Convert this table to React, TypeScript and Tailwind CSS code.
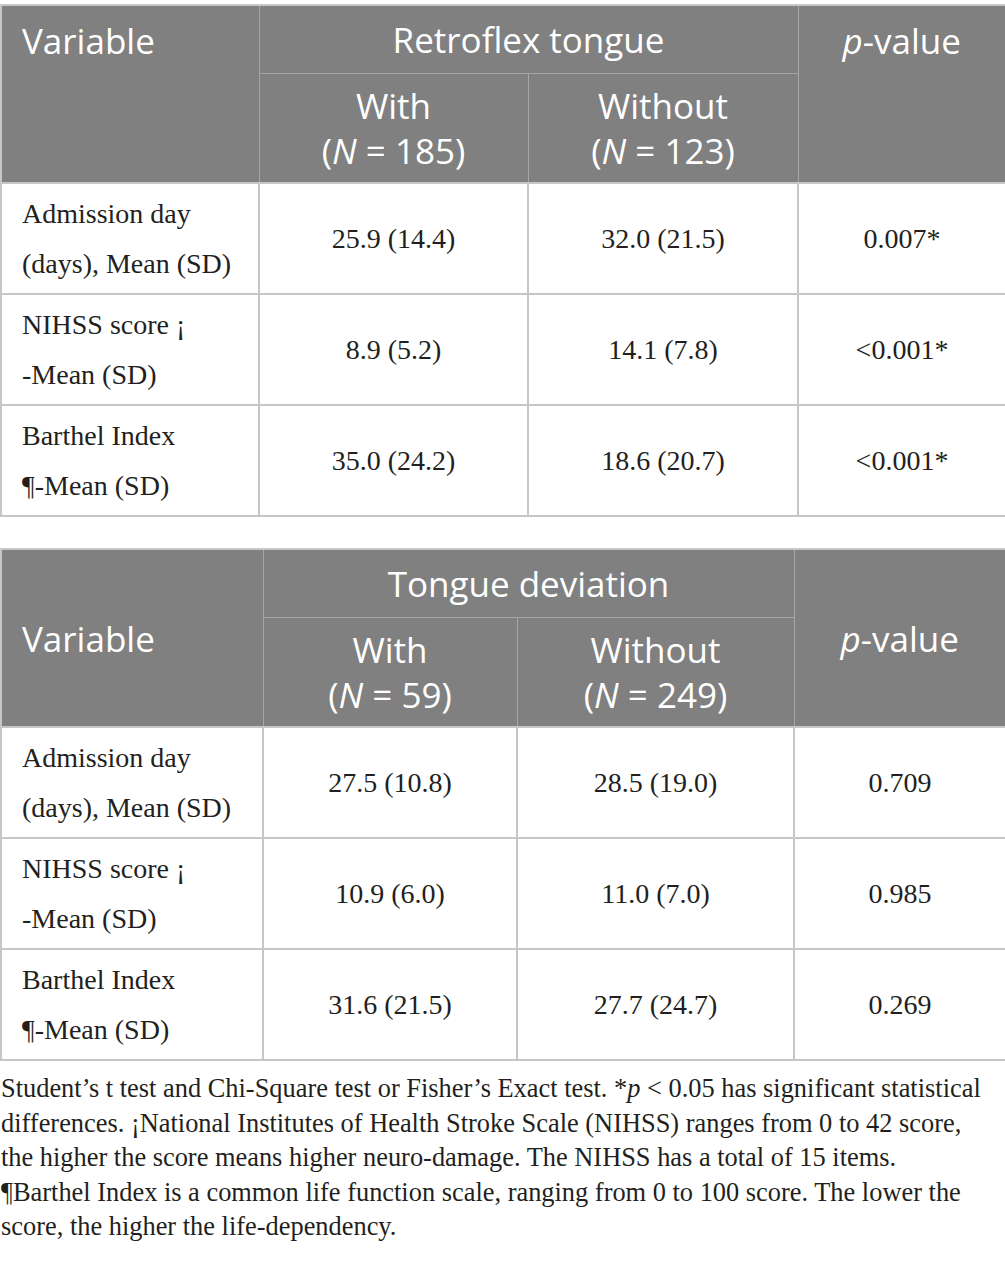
import React from 'react';

type Row = { label: [string, string]; a: string; b: string; p: string };

type TableSpec = {
  group: string;
  nWith: number;
  nWithout: number;
  cols: [string, string, string, string];
  centered: boolean;
  rows: Row[];
};

const tables: TableSpec[] = [
  {
    group: 'Retroflex tongue',
    nWith: 185,
    nWithout: 123,
    cols: ['w-[258px]', 'w-[269px]', 'w-[270px]', 'w-[208px]'],
    centered: false,
    rows: [
      { label: ['Admission day', '(days), Mean (SD)'], a: '25.9 (14.4)', b: '32.0 (21.5)', p: '0.007*' },
      { label: ['NIHSS score ¡', '-Mean (SD)'], a: '8.9 (5.2)', b: '14.1 (7.8)', p: '<0.001*' },
      { label: ['Barthel Index', '¶-Mean (SD)'], a: '35.0 (24.2)', b: '18.6 (20.7)', p: '<0.001*' },
    ],
  },
  {
    group: 'Tongue deviation',
    nWith: 59,
    nWithout: 249,
    cols: ['w-[262px]', 'w-[254px]', 'w-[277px]', 'w-[212px]'],
    centered: true,
    rows: [
      { label: ['Admission day', '(days), Mean (SD)'], a: '27.5 (10.8)', b: '28.5 (19.0)', p: '0.709' },
      { label: ['NIHSS score ¡', '-Mean (SD)'], a: '10.9 (6.0)', b: '11.0 (7.0)', p: '0.985' },
      { label: ['Barthel Index', '¶-Mean (SD)'], a: '31.6 (21.5)', b: '27.7 (24.7)', p: '0.269' },
    ],
  },
];

const th = "border border-[#a6a6a6] bg-[#7f807f] font-['Open_Sans',sans-serif] text-[35px] font-normal leading-[45px] text-white";
const td = "h-[111px] border-2 border-[#c6c6c6] align-middle font-['Liberation_Serif',serif] text-[28px] leading-[50px] text-[#231f20]";

const StatTable: React.FC<{ t: TableSpec }> = ({ t }) => (
  <table className="w-[1005px] table-fixed border-collapse border-2 border-[#c6c6c6]">
    <colgroup>
      {t.cols.map((c, i) => (
        <col key={i} className={c} />
      ))}
    </colgroup>
    <thead>
      <tr>
        <th
          rowSpan={2}
          className={`${th} px-[20px] text-left ${t.centered ? 'align-middle' : 'align-top pt-[12px]'}`}
        >
          Variable
        </th>
        <th colSpan={2} className={`${th} h-[68px] text-center align-middle`}>
          {t.group}
        </th>
        <th rowSpan={2} className={`${th} text-center ${t.centered ? 'align-middle' : 'align-top pt-[12px]'}`}>
          <i>p</i>-value
        </th>
      </tr>
      <tr>
        <th className={`${th} h-[110px] text-center align-middle`}>
          With
          <br />(<i>N</i> = {t.nWith})
        </th>
        <th className={`${th} text-center align-middle`}>
          Without
          <br />(<i>N</i> = {t.nWithout})
        </th>
      </tr>
    </thead>
    <tbody>
      {t.rows.map((r) => (
        <tr key={r.label[0]}>
          <td className={`${td} px-[20px] text-left`}>
            {r.label[0]}
            <br />
            {r.label[1]}
          </td>
          <td className={`${td} text-center`}>{r.a}</td>
          <td className={`${td} text-center`}>{r.b}</td>
          <td className={`${td} text-center`}>{r.p}</td>
        </tr>
      ))}
    </tbody>
  </table>
);

export default function App() {
  return (
    <div className="w-[1005px] bg-white pt-[4px]">
      <StatTable t={tables[0]} />
      <div className="mt-[31px]">
        <StatTable t={tables[1]} />
      </div>
      <p className="pt-[10px] pl-[1px] font-['Liberation_Serif',serif] text-[26.4px] leading-[34.5px] text-[#231f20]">
        <span className="block whitespace-nowrap">
          Student’s t test and Chi-Square test or Fisher’s Exact test. *<i>p</i> &lt; 0.05 has significant statistical
        </span>
        <span className="block whitespace-nowrap">
          differences. ¡National Institutes of Health Stroke Scale (NIHSS) ranges from 0 to 42 score,
        </span>
        <span className="block whitespace-nowrap">
          the higher the score means higher neuro-damage. The NIHSS has a total of 15 items.
        </span>
        <span className="block whitespace-nowrap">
          ¶Barthel Index is a common life function scale, ranging from 0 to 100 score. The lower the
        </span>
        <span className="block whitespace-nowrap">score, the higher the life-dependency.</span>
      </p>
    </div>
  );
}
